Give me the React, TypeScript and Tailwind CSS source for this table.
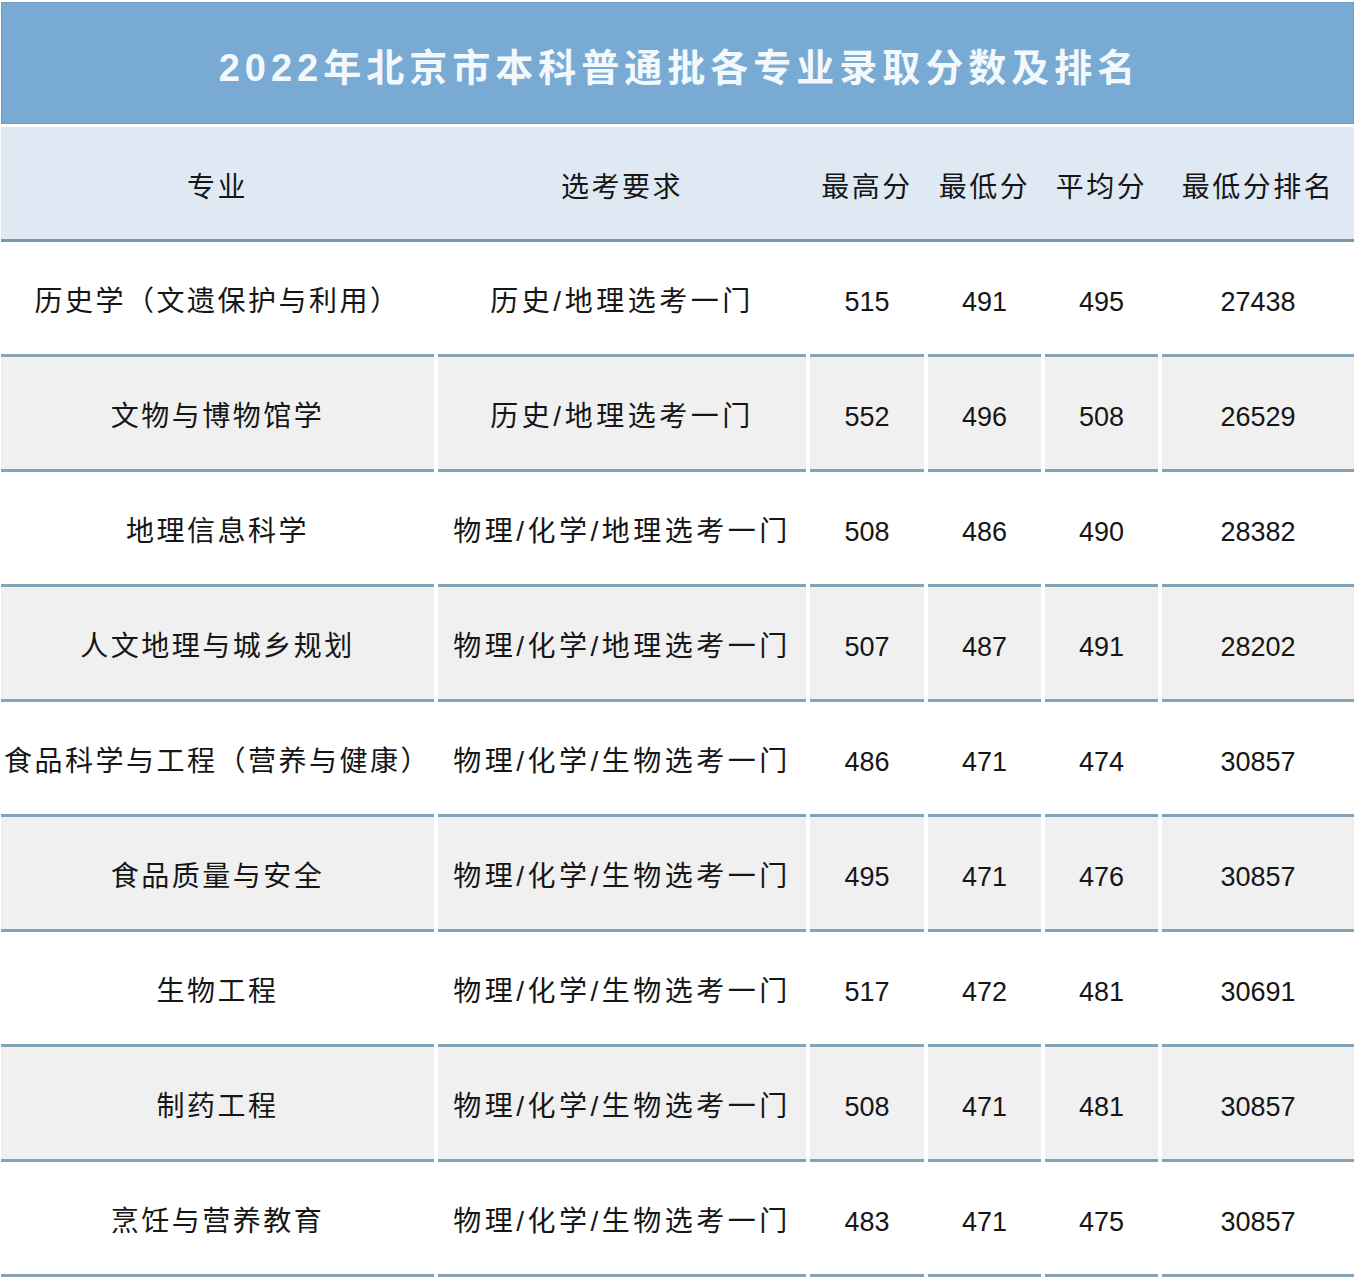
import React from 'react';

const rows = [
  ['历史学（文遗保护与利用）', '历史/地理选考一门', '515', '491', '495', '27438'],
  ['文物与博物馆学', '历史/地理选考一门', '552', '496', '508', '26529'],
  ['地理信息科学', '物理/化学/地理选考一门', '508', '486', '490', '28382'],
  ['人文地理与城乡规划', '物理/化学/地理选考一门', '507', '487', '491', '28202'],
  ['食品科学与工程（营养与健康）', '物理/化学/生物选考一门', '486', '471', '474', '30857'],
  ['食品质量与安全', '物理/化学/生物选考一门', '495', '471', '476', '30857'],
  ['生物工程', '物理/化学/生物选考一门', '517', '472', '481', '30691'],
  ['制药工程', '物理/化学/生物选考一门', '508', '471', '481', '30857'],
  ['烹饪与营养教育', '物理/化学/生物选考一门', '483', '471', '475', '30857'],
];

const headers = ['专业', '选考要求', '最高分', '最低分', '平均分', '最低分排名'];

const cols = 'grid grid-cols-[433px_368px_114px_113px_113px_192px] gap-x-1';

export default function App() {
  return (
    <div
      className="w-[1355px] h-[1280px] bg-white pt-[2px] px-[1px] overflow-hidden text-[#161616]"
      style={{ fontFamily: '"Liberation Sans", "Noto Sans CJK SC", sans-serif' }}
    >
      {/* Title */}
      <div className="h-[122px] bg-[#79aad3] border border-[#6e9cc3] flex items-center justify-center pt-[10px]">
        <h1 className="text-[38px] font-bold tracking-[5px] text-[#f3f8fc] pl-[4px]">
          2022年北京市本科普通批各专业录取分数及排名
        </h1>
      </div>

      {/* Header */}
      <div className={`${cols} mt-[3px] h-[115px] bg-[#dfe9f4] border-b-[3px] border-[#7d97a8]`}>
        {headers.map((h) => (
          <div key={h} className="flex items-center justify-center pt-[10px] text-[28px] tracking-[2.5px]">
            {h}
          </div>
        ))}
      </div>

      {/* Body */}
      {rows.map((r, i) => (
        <div key={i} className={cols}>
          {r.map((c, j) => (
            <div
              key={j}
              className={`h-[115px] flex items-center justify-center pt-[8px] border-b-[3px] border-[#86a3b5] ${
                i % 2 === 1 ? 'bg-[#f0f0f1]' : 'bg-white'
              } ${j === 0 ? 'text-[28px] tracking-[2.5px]' : j === 1 ? 'text-[28px] tracking-[3.5px]' : 'text-[27px]'}`}
            >
              {c}
            </div>
          ))}
        </div>
      ))}
    </div>
  );
}
